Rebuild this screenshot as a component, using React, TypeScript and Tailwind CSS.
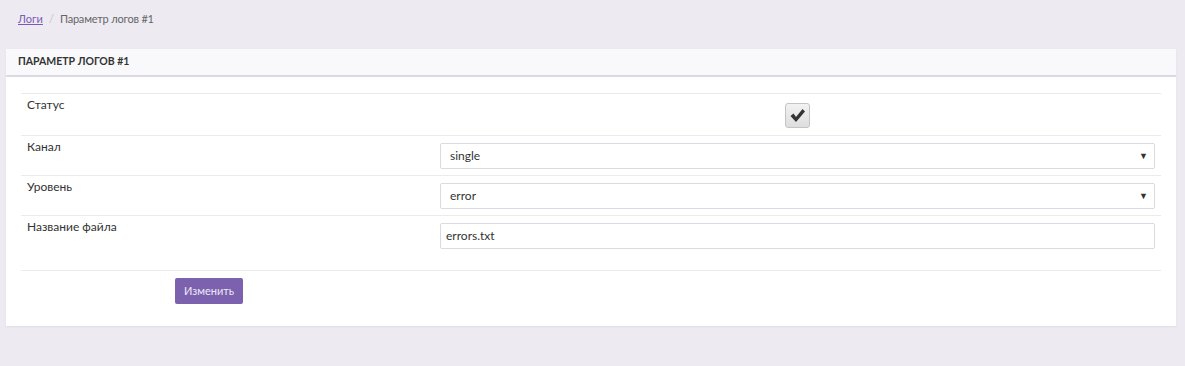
export default function App() {
  const rows = [
    { label: "Канал", value: "single", select: true },
    { label: "Уровень", value: "error", select: true },
    { label: "Название файла", value: "errors.txt", select: false },
  ];

  return (
    <div className="min-h-[366px] bg-[#edeaf2] pt-[9px] font-['Lato','Liberation_Sans',sans-serif] text-[12px] text-[#333]">
      <div className="flex items-center h-[20px] px-[18px] text-[11px]">
        <a href="#" className="text-[#7a5ab3] underline">
          Логи
        </a>
        <span className="px-[6px] text-[#c8c4d2]">/</span>
        <span className="text-[#666] tracking-[-0.2px]">Параметр логов #1</span>
      </div>

      <div className="mx-[6px] mt-[20px] bg-white shadow-[0_1px_2px_rgba(0,0,0,0.06)] w-[1170px]">
        <div className="h-[28px] px-[12px] flex items-center bg-[#f9f9fb] border-b-2 border-[#dcd8e6] text-[10.5px] font-bold text-[#333]">
          ПАРАМЕТР ЛОГОВ #1
        </div>

        <div className="px-[15px] pt-[16px] pb-[22px]">
          <div className="border-t border-[#ebebeb]">
            <div className="flex h-[42px] border-b border-[#ebebeb]">
              <div className="w-[413px] px-[6px] pt-[2px]">Статус</div>
              <div className="flex-1 flex justify-center pt-[9px]">
                <div className="w-[25px] h-[25px] rounded-[3px] border border-[#c4c4c4] bg-gradient-to-b from-[#f2f2f2] to-[#dedede] flex items-center justify-center">
                  <svg width="17" height="15" viewBox="0 0 17 15">
                    <path d="M1.5 8 L4.5 5.5 L7 9 L13.5 1 L16 3.5 L7 14 Z" fill="#333" />
                  </svg>
                </div>
              </div>
            </div>
            {rows.map((r, i) => (
              <div
                key={r.label}
                className={`flex h-[40px] ${i < rows.length - 1 ? "border-b border-[#ebebeb]" : ""}`}
              >
                <div className="w-[413px] px-[6px] pt-[2px]">{r.label}</div>
                <div className="flex-1 px-[6px] pt-[7px]">
                  <div className="h-[26px] border border-[#dcd9e2] rounded-[2px] flex items-center justify-between pr-[6px] text-[12px] text-[#333]">
                    <span className={r.select ? "pl-[9px]" : "pl-[5px]"}>{r.value}</span>
                    {r.select && <span className="text-[9px] text-[#333]">▼</span>}
                  </div>
                </div>
              </div>
            ))}
          </div>

          <div className="mt-[14px] border-t border-[#ebebeb] pt-[7px] pl-[154px]">
            <button className="h-[26px] px-[9px] rounded-[2px] bg-[#7c62ae] text-[#ece8f6] text-[11px]">
              Изменить
            </button>
          </div>
        </div>
      </div>
    </div>
  );
}
